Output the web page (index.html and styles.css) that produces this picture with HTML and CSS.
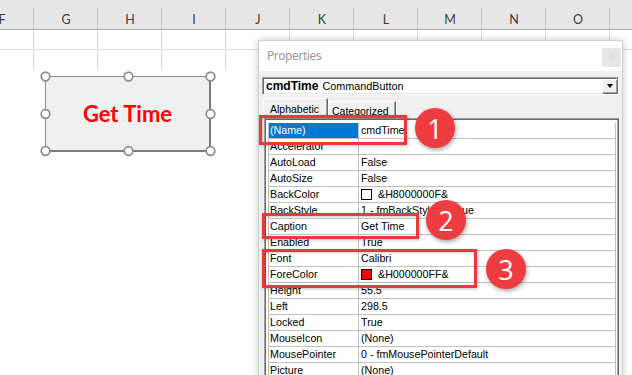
FILE: index.html
```html
<!DOCTYPE html>
<html>
<head>
<meta charset="utf-8">
<link rel="stylesheet" href="styles.css">
</head>
<body>
<div class="sheet">
  <div class="colhead">
    <div class="col">F</div><div class="col">G</div><div class="col">H</div><div class="col">I</div><div class="col">J</div><div class="col">K</div><div class="col">L</div><div class="col">M</div><div class="col">N</div><div class="col">O</div><div class="col"></div>
  </div>
  <div class="gridrow first">
    <div class="c"></div><div class="c"></div><div class="c"></div><div class="c"></div><div class="c"></div><div class="c"></div><div class="c"></div><div class="c"></div><div class="c"></div><div class="c"></div><div class="c"></div>
  </div>
  <div class="gridrow">
    <div class="c"></div><div class="c"></div><div class="c"></div><div class="c"></div><div class="c"></div><div class="c"></div><div class="c"></div><div class="c"></div><div class="c"></div><div class="c"></div><div class="c"></div>
  </div>
</div>

<div class="cmdbtn">Get Time</div>
<svg class="handles" width="178" height="88" viewBox="0 0 178 88">
  <g fill="#fff" stroke="#8c8c8c" stroke-width="1.7">
    <circle cx="6.5" cy="6.5" r="4.3"/>
    <circle cx="89.5" cy="6.5" r="4.3"/>
    <circle cx="171.5" cy="6.5" r="4.3"/>
    <circle cx="6.5" cy="44" r="4.3"/>
    <circle cx="171.5" cy="44" r="4.3"/>
    <circle cx="6.5" cy="81" r="4.3"/>
    <circle cx="89.5" cy="81" r="4.3"/>
    <circle cx="171.5" cy="81" r="4.3"/>
  </g>
</svg>

<div class="props">
  <div class="titlebar">
    <div class="title">Properties</div>
    <div class="close">×</div>
  </div>
  <div class="pbody">
    <div class="combo">
      <span class="cname">cmdTime</span><span class="ctype">CommandButton</span>
      <div class="dd"><div class="tri"></div></div>
    </div>
    <div class="tabs">
      <div class="tab sel">Alphabetic</div>
      <div class="tab cat">Categorized</div>
    </div>
    <div class="grid">
      <div class="prow"><div class="pname hl">(Name)</div><div class="pval">cmdTime</div></div>
      <div class="prow"><div class="pname">Accelerator</div><div class="pval"></div></div>
      <div class="prow"><div class="pname">AutoLoad</div><div class="pval">False</div></div>
      <div class="prow"><div class="pname">AutoSize</div><div class="pval">False</div></div>
      <div class="prow"><div class="pname">BackColor</div><div class="pval"><span class="sw"></span>&amp;H8000000F&amp;</div></div>
      <div class="prow"><div class="pname">BackStyle</div><div class="pval">1 - fmBackStyleOpaque</div></div>
      <div class="prow"><div class="pname">Caption</div><div class="pval">Get Time</div></div>
      <div class="prow"><div class="pname">Enabled</div><div class="pval">True</div></div>
      <div class="prow"><div class="pname">Font</div><div class="pval">Calibri</div></div>
      <div class="prow"><div class="pname">ForeColor</div><div class="pval"><span class="sw red"></span>&amp;H000000FF&amp;</div></div>
      <div class="prow"><div class="pname">Height</div><div class="pval">55.5</div></div>
      <div class="prow"><div class="pname">Left</div><div class="pval">298.5</div></div>
      <div class="prow"><div class="pname">Locked</div><div class="pval">True</div></div>
      <div class="prow"><div class="pname">MouseIcon</div><div class="pval">(None)</div></div>
      <div class="prow"><div class="pname">MousePointer</div><div class="pval">0 - fmMousePointerDefault</div></div>
      <div class="prow"><div class="pname">Picture</div><div class="pval">(None)</div></div>
    </div>
  </div>
</div>

<div class="mark m1"></div>
<div class="mark m2"></div>
<div class="mark m3"></div>
<div class="badge b1">1</div>
<div class="badge b2">2</div>
<div class="badge b3">3</div>
</body>
</html>
```

FILE: styles.css
```css
* { box-sizing: border-box; }

body {
  margin: 0;
  width: 632px;
  height: 375px;
  overflow: hidden;
  position: relative;
  background: #fff;
  font-family: "Liberation Sans", Arial, sans-serif;
}

/* spreadsheet */
.sheet {
  width: 632px;
  overflow: hidden;
}
.colhead {
  display: flex;
  width: max-content;
  height: 30px;
  margin-left: -30px;
  background: #e6e6e6;
  border-bottom: 1px solid #ababab;
}
.col {
  position: relative;
  flex: none;
  width: 64px;
  display: flex;
  justify-content: center;
  align-items: center;
  padding-top: 10px;
  font-family: Lato, sans-serif;
  font-size: 12.5px;
  color: #3c3c3c;
}
.col::after {
  content: "";
  position: absolute;
  right: 0;
  top: 8px;
  bottom: 0;
  width: 1px;
  background: #c6c6c6;
}
.gridrow {
  display: flex;
  width: max-content;
  height: 20px;
  margin-left: -30px;
}
.gridrow.first { border-bottom: 1px solid #d9d9d9; }
.gridrow .c {
  flex: none;
  width: 64px;
  border-right: 1px solid #d9d9d9;
}

/* command button on the sheet */
.cmdbtn {
  position: absolute;
  left: 45px;
  top: 76px;
  width: 166px;
  height: 76px;
  background: #f0f0f0;
  border-top: 1px solid #8c8c8c;
  border-left: 1px solid #8c8c8c;
  border-right: 2px solid #7a7a7a;
  border-bottom: 2px solid #7a7a7a;
  display: flex;
  align-items: center;
  justify-content: center;
  font-family: Lato, sans-serif;
  font-weight: 700;
  font-size: 22px;
  color: #ff0000;
}
.handles {
  position: absolute;
  left: 39px;
  top: 70px;
}

/* properties window */
.props {
  position: absolute;
  left: 258px;
  top: 40px;
  width: 365px;
  height: 345px;
  background: #f0f0f0;
  border: 1px solid #cfcfcf;
  box-shadow: 0 0 7px rgba(0, 0, 0, 0.22);
}
.titlebar {
  height: 30px;
  background: #fff;
  display: flex;
  justify-content: space-between;
  align-items: flex-start;
}
.title {
  margin: 7px 0 0 8px;
  line-height: 16px;
  font-family: "Noto Sans", sans-serif;
  font-size: 12px;
  letter-spacing: -0.4px;
  color: #9a9a9a;
}
.close {
  width: 19px;
  height: 19px;
  margin: 7px 1px 0 0;
  background: #e6e6e6;
  color: #d6d6d6;
  font-size: 13px;
  line-height: 18px;
  text-align: center;
}
.pbody { padding: 6px 3px 0; }

.combo {
  height: 18px;
  display: flex;
  align-items: center;
  padding-left: 3px;
  background: #fff;
  border-top: 1px solid #a0a0a0;
  border-left: 1px solid #a0a0a0;
  border-right: 1px solid #fff;
  border-bottom: 1px solid #fff;
  box-shadow: inset 1px 1px 0 #696969, inset -1px -1px 0 #e3e3e3;
}
.cname { font-weight: 700; font-size: 12px; }
.ctype { font-size: 10.8px; margin-left: 4px; }
.dd {
  margin-left: auto;
  width: 16px;
  height: 15px;
  display: flex;
  align-items: center;
  justify-content: center;
  background: #f0f0f0;
  border-top: 1px solid #fff;
  border-left: 1px solid #fff;
  border-right: 1px solid #696969;
  border-bottom: 1px solid #696969;
  box-shadow: inset -1px -1px 0 #a0a0a0;
}
.tri {
  width: 1px;
  height: 0;
  border-left: 3px solid transparent;
  border-right: 3px solid transparent;
  border-top: 4px solid #000;
}

.tabs {
  display: flex;
  align-items: flex-end;
  height: 23px;
  padding-left: 1px;
}
.tab {
  font-size: 10.5px;
  line-height: 12px;
  padding-top: 3px;
  border-top: 1px solid #fff;
  border-left: 1px solid #fff;
  border-right: 1px solid #696969;
  box-shadow: inset -1px 0 0 #a0a0a0;
}
.tab.sel { width: 65px; height: 20px; padding-left: 6px; padding-top: 4px; }
.tab.cat { width: 68px; height: 17px; padding-left: 3px; }

.grid {
  margin-left: 2px;
  width: 355px;
  height: 270px;
  padding: 4px 2px 0 3px;
  background: #fff;
  border-top: 1px solid #a0a0a0;
  border-left: 1px solid #a0a0a0;
  border-right: 1px solid #696969;
  box-shadow: inset 1px 1px 0 #696969, inset -1px 0 0 #a0a0a0;
}
.prow {
  display: flex;
  height: 16px;
  border-left: 1px solid #c0c0c0;
  border-right: 1px solid #c0c0c0;
  border-bottom: 1px solid #c0c0c0;
  font-size: 10.7px;
  line-height: 15px;
  color: #000;
}
.pname {
  flex: none;
  width: 90px;
  padding-left: 1px;
  border-right: 1px solid #c0c0c0;
  white-space: nowrap;
}
.pname.hl { background: #0078d7; color: #fff; }
.pval {
  flex: 1;
  padding-left: 2px;
  display: flex;
  align-items: center;
  white-space: nowrap;
}
.sw {
  width: 11px;
  height: 11px;
  margin-right: 6px;
  background: #fff;
  border: 1px solid #000;
}
.sw.red { background: #ff0000; }

/* annotations */
.mark {
  position: absolute;
  border: 3px solid #e8393e;
  box-shadow: 1px 1px 3px rgba(0, 0, 0, 0.25), inset 1px 1px 2px rgba(0, 0, 0, 0.2);
}
.m1 { left: 259px; top: 115px; width: 148px; height: 30px; }
.m2 { left: 262px; top: 213px; width: 157px; height: 26px; }
.m3 { left: 262px; top: 249px; width: 215px; height: 39px; }

.badge {
  position: absolute;
  width: 40px;
  height: 40px;
  border-radius: 50%;
  background: #ef3c41;
  color: #fff;
  display: flex;
  align-items: center;
  justify-content: center;
  font-family: "Open Sans", sans-serif;
  font-size: 27px;
  line-height: 1;
  box-shadow: 1px 2px 4px rgba(0, 0, 0, 0.35);
}
.b1 { left: 415px; top: 108px; }
.b2 { left: 426px; top: 200px; }
.b3 { left: 486px; top: 249px; }
```
